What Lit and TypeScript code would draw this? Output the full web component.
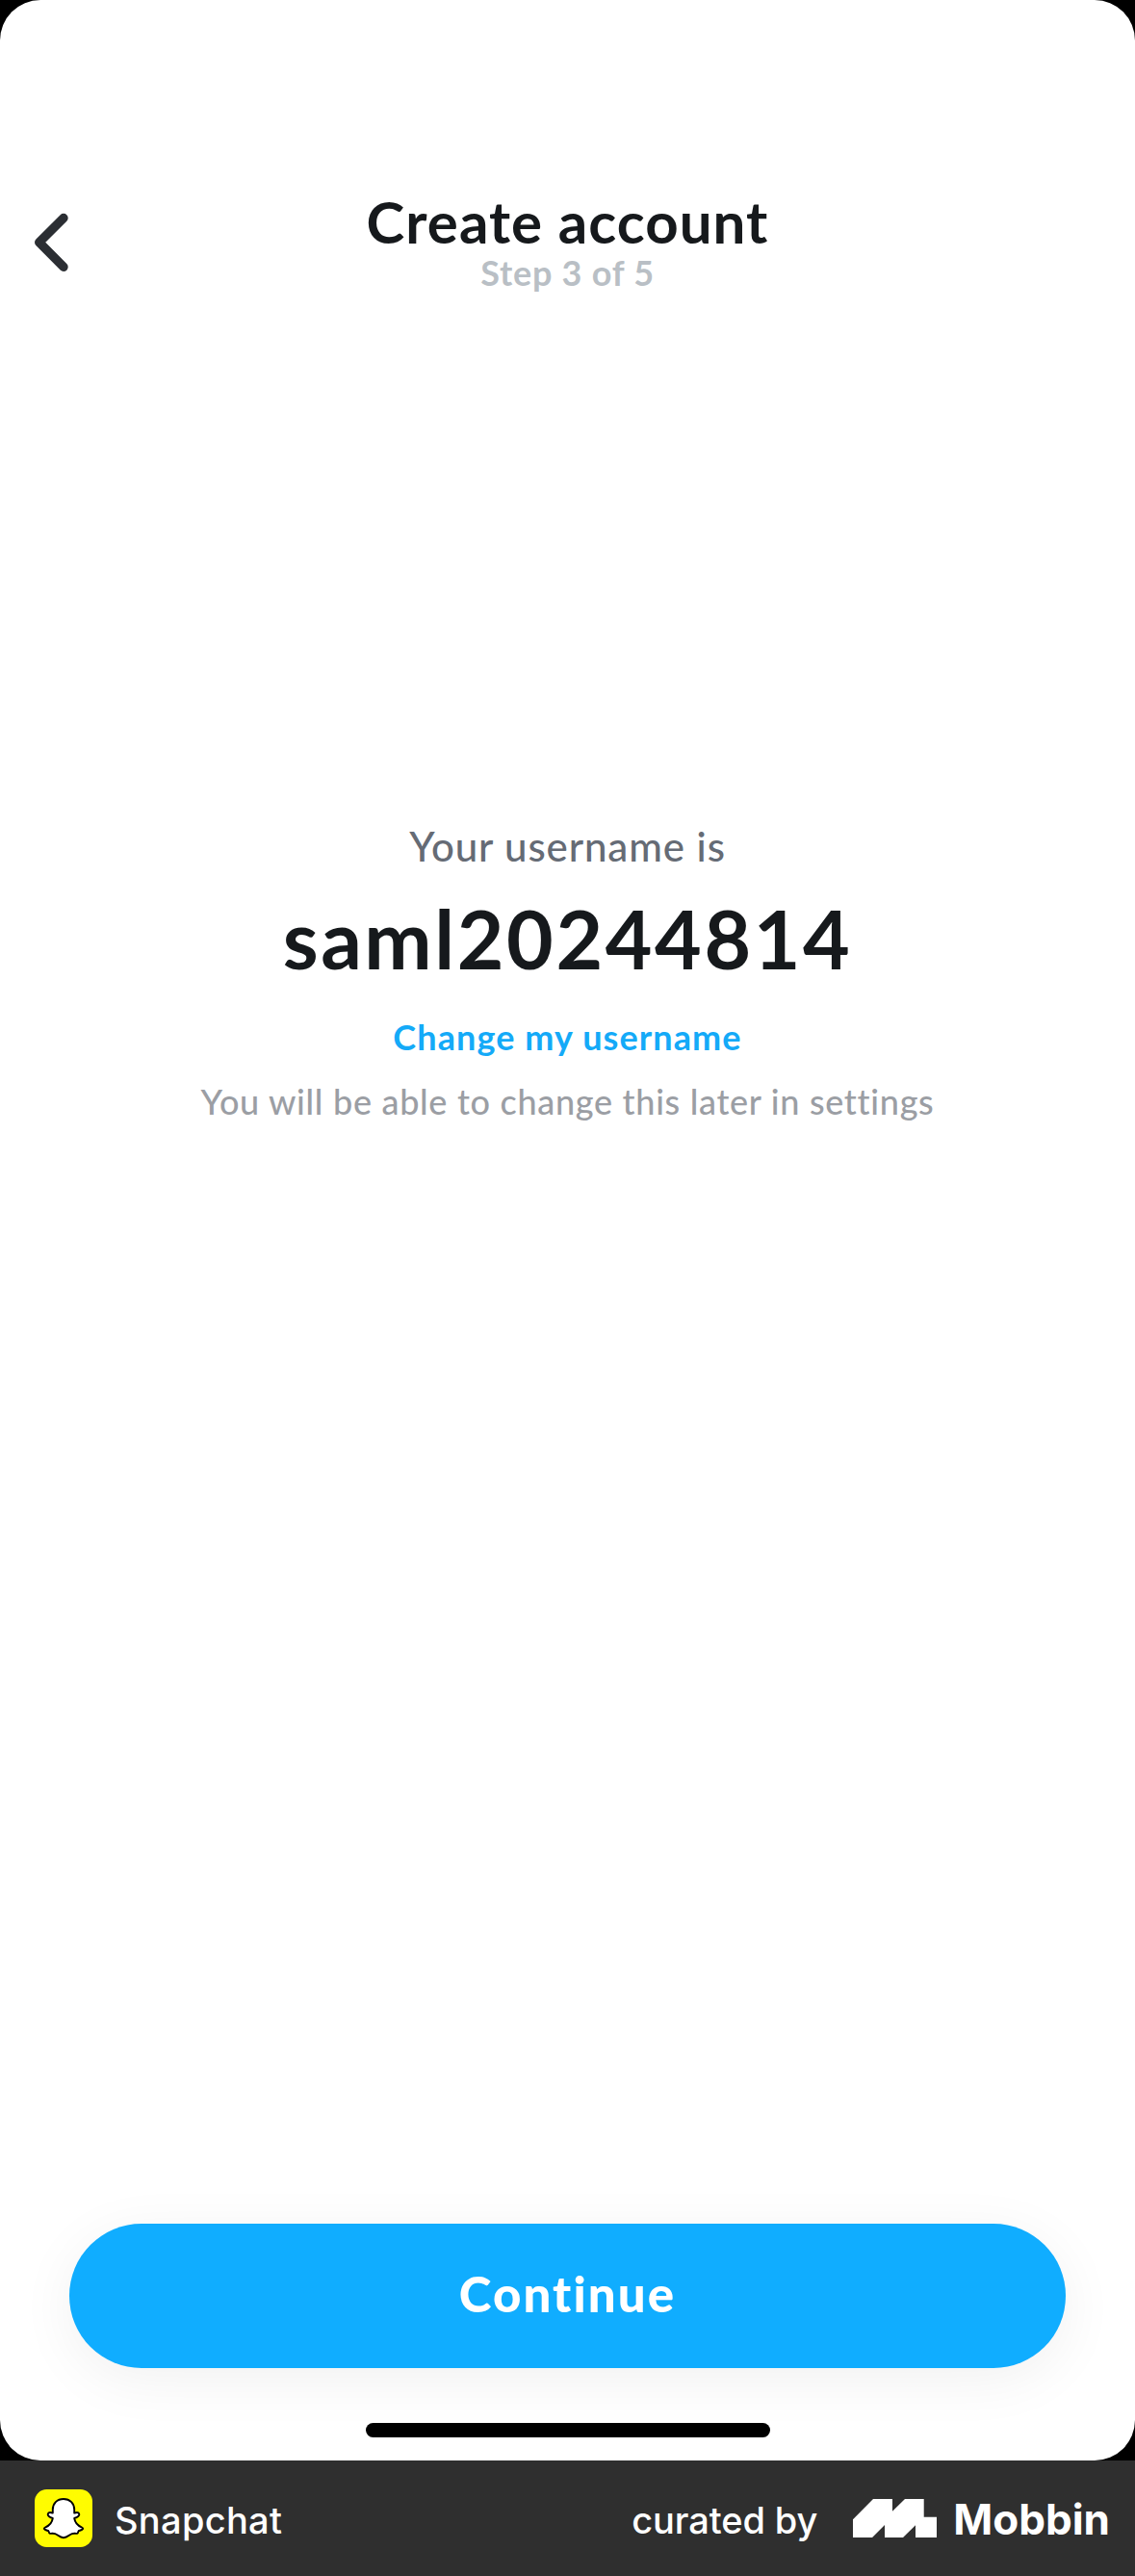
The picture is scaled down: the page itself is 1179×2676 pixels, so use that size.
import { LitElement, html, css } from "lit";
import { customElement, property } from "lit/decorators.js";

@customElement("screen-header")
class ScreenHeader extends LitElement {
  @property() heading = "";
  @property() step = "";

  static styles = css`
    :host {
      display: grid;
      grid-template-columns: 120px 1fr 120px;
      padding-top: 197px;
    }
    .back {
      box-sizing: border-box;
      padding: 23px 0 0 34px;
      margin: 0;
      border: 0;
      background: none;
      text-align: left;
      height: 87px;
    }
    .back svg {
      display: block;
    }
    .titles {
      text-align: center;
      height: 107px;
    }
    .heading {
      margin: 0;
      font-size: 60px;
      line-height: 66px;
      font-weight: 700;
      letter-spacing: 1.05px;
      color: #16191c;
    }
    .step {
      margin: 0;
      font-size: 36px;
      line-height: 41px;
      font-weight: 700;
      letter-spacing: 0.75px;
      color: #b9bfc5;
    }
  `;

  render() {
    return html`
      <button class="back" aria-label="Back">
        <svg width="40" height="64" viewBox="0 0 40 64" fill="none">
          <path d="M32 6.5 6.7 31.8 32 57.3" stroke="#2b2e33" stroke-width="9.4" stroke-linecap="round" stroke-linejoin="round" />
        </svg>
      </button>
      <div class="titles">
        <h1 class="heading">${this.heading}</h1>
        <p class="step">${this.step}</p>
      </div>
    `;
  }
}

@customElement("username-panel")
class UsernamePanel extends LitElement {
  @property() username = "";

  static styles = css`
    :host {
      display: flex;
      flex-direction: column;
      align-items: center;
      white-space: nowrap;
    }
    .label {
      font-size: 42px;
      line-height: 50px;
      font-weight: 500;
      letter-spacing: 0.9px;
      color: #656b75;
    }
    .name {
      margin-top: 21px;
      font-size: 84px;
      line-height: 100px;
      font-weight: 700;
      letter-spacing: 2.6px;
      color: #16191c;
    }
    .change {
      margin-top: 30px;
      font-size: 36px;
      line-height: 44px;
      font-weight: 700;
      letter-spacing: 1.1px;
      color: #14aaf8;
    }
    .note {
      margin-top: 23px;
      font-size: 36px;
      line-height: 44px;
      font-weight: 500;
      letter-spacing: 0.7px;
      color: #9b9ea4;
    }
  `;

  render() {
    return html`
      <div class="label">Your username is</div>
      <div class="name">${this.username}</div>
      <div class="change">Change my username</div>
      <div class="note">You will be able to change this later in settings</div>
    `;
  }
}

@customElement("credit-bar")
class CreditBar extends LitElement {
  static styles = css`
    :host {
      display: flex;
      align-items: center;
      height: 120px;
      padding: 0 26px 0 36px;
      box-sizing: border-box;
      background: #2f2f2f;
      color: #fff;
      font-family: Inter, "Liberation Sans", sans-serif;
      font-size: 38px;
      font-weight: 500;
      line-height: 46px;
      white-space: nowrap;
    }
    svg {
      display: block;
      flex: none;
    }
    .app {
      margin-left: 23px;
      padding-top: 3px;
      letter-spacing: 0.3px;
    }
    .by {
      margin-left: auto;
      padding-top: 3px;
      letter-spacing: -0.1px;
    }
    .mark {
      margin-left: 37px;
    }
    .brand {
      margin-left: 17px;
      padding-top: 2px;
      font-size: 44px;
      font-weight: 700;
    }
  `;

  render() {
    return html`
      <svg width="60" height="60" viewBox="0 0 60 60">
        <rect width="60" height="60" rx="12.5" fill="#fffc00" />
        <path
          d="M30 10c-6.800 0-11.200 4.600-11.200 11v3.600c-2.200-.9-4.300-.9-5 .7-.8 1.900 1.700 3.600 5 4.700-.7 4.600-3.600 7.600-7.500 9.300-1.800.8-1.900 1.700-.4 2.600 1.300.8 2.900.9 3.500 1.400.7.700.2 1.800 1.100 2.300 1.200.6 3.600-.2 5.700.5 2.900.9 4.500 4.100 8.800 4.100s5.900-3.200 8.800-4.100c2.100-.7 4.500.1 5.700-.5.9-.5.4-1.600 1.100-2.300.6-.5 2.200-.6 3.500-1.400 1.500-.9 1.400-1.800-.4-2.600-3.900-1.700-6.800-4.700-7.500-9.300 3.300-1.100 5.800-2.800 5-4.700-.7-1.600-2.800-1.600-5-.7V21c0-6.400-4.400-11-11.200-11z"
          fill="#fff" stroke="#000" stroke-width="1.900" stroke-linejoin="round"
        />
      </svg>
      <span class="app">Snapchat</span>
      <span class="by">curated by</span>
      <svg class="mark" width="87" height="40" viewBox="0 0 87 40">
        <path d="M0 21.300 21 0H41V12.700L54 0H73.700V18.700H87V40H65V27.300L52 40H33V27L20 40H0Z" fill="#fff" />
      </svg>
      <span class="brand">Mobbin</span>
    `;
  }
}

@customElement("app-root")
class AppRoot extends LitElement {
  static styles = css`
    :host {
      display: block;
      width: 1179px;
      height: 2676px;
      background: #000;
      font-family: Lato, "Open Sans", sans-serif;
    }
    .screen {
      display: flex;
      flex-direction: column;
      height: 2556px;
      box-sizing: border-box;
      border-radius: 42px;
      background: #fff;
    }
    .panel {
      margin-top: 550px;
    }
    .continue {
      margin: auto 72px 0;
      height: 150px;
      flex: none;
      padding: 0 0 4px;
      border: 0;
      border-radius: 75px;
      background: #10adff;
      box-shadow: 0 12px 60px rgba(0, 0, 0, 0.06);
      color: #fff;
      font: 900 51px/60px Lato, "Open Sans", sans-serif;
      letter-spacing: 2.1px;
    }
    .home {
      align-self: center;
      width: 420px;
      height: 15px;
      margin: 57px 0 24px;
      border-radius: 8px;
      background: #000;
    }
  `;

  render() {
    return html`
      <main class="screen">
        <screen-header heading="Create account" step="Step 3 of 5"></screen-header>
        <username-panel class="panel" username="saml20244814"></username-panel>
        <button class="continue">Continue</button>
        <div class="home"></div>
      </main>
      <credit-bar></credit-bar>
    `;
  }
}
